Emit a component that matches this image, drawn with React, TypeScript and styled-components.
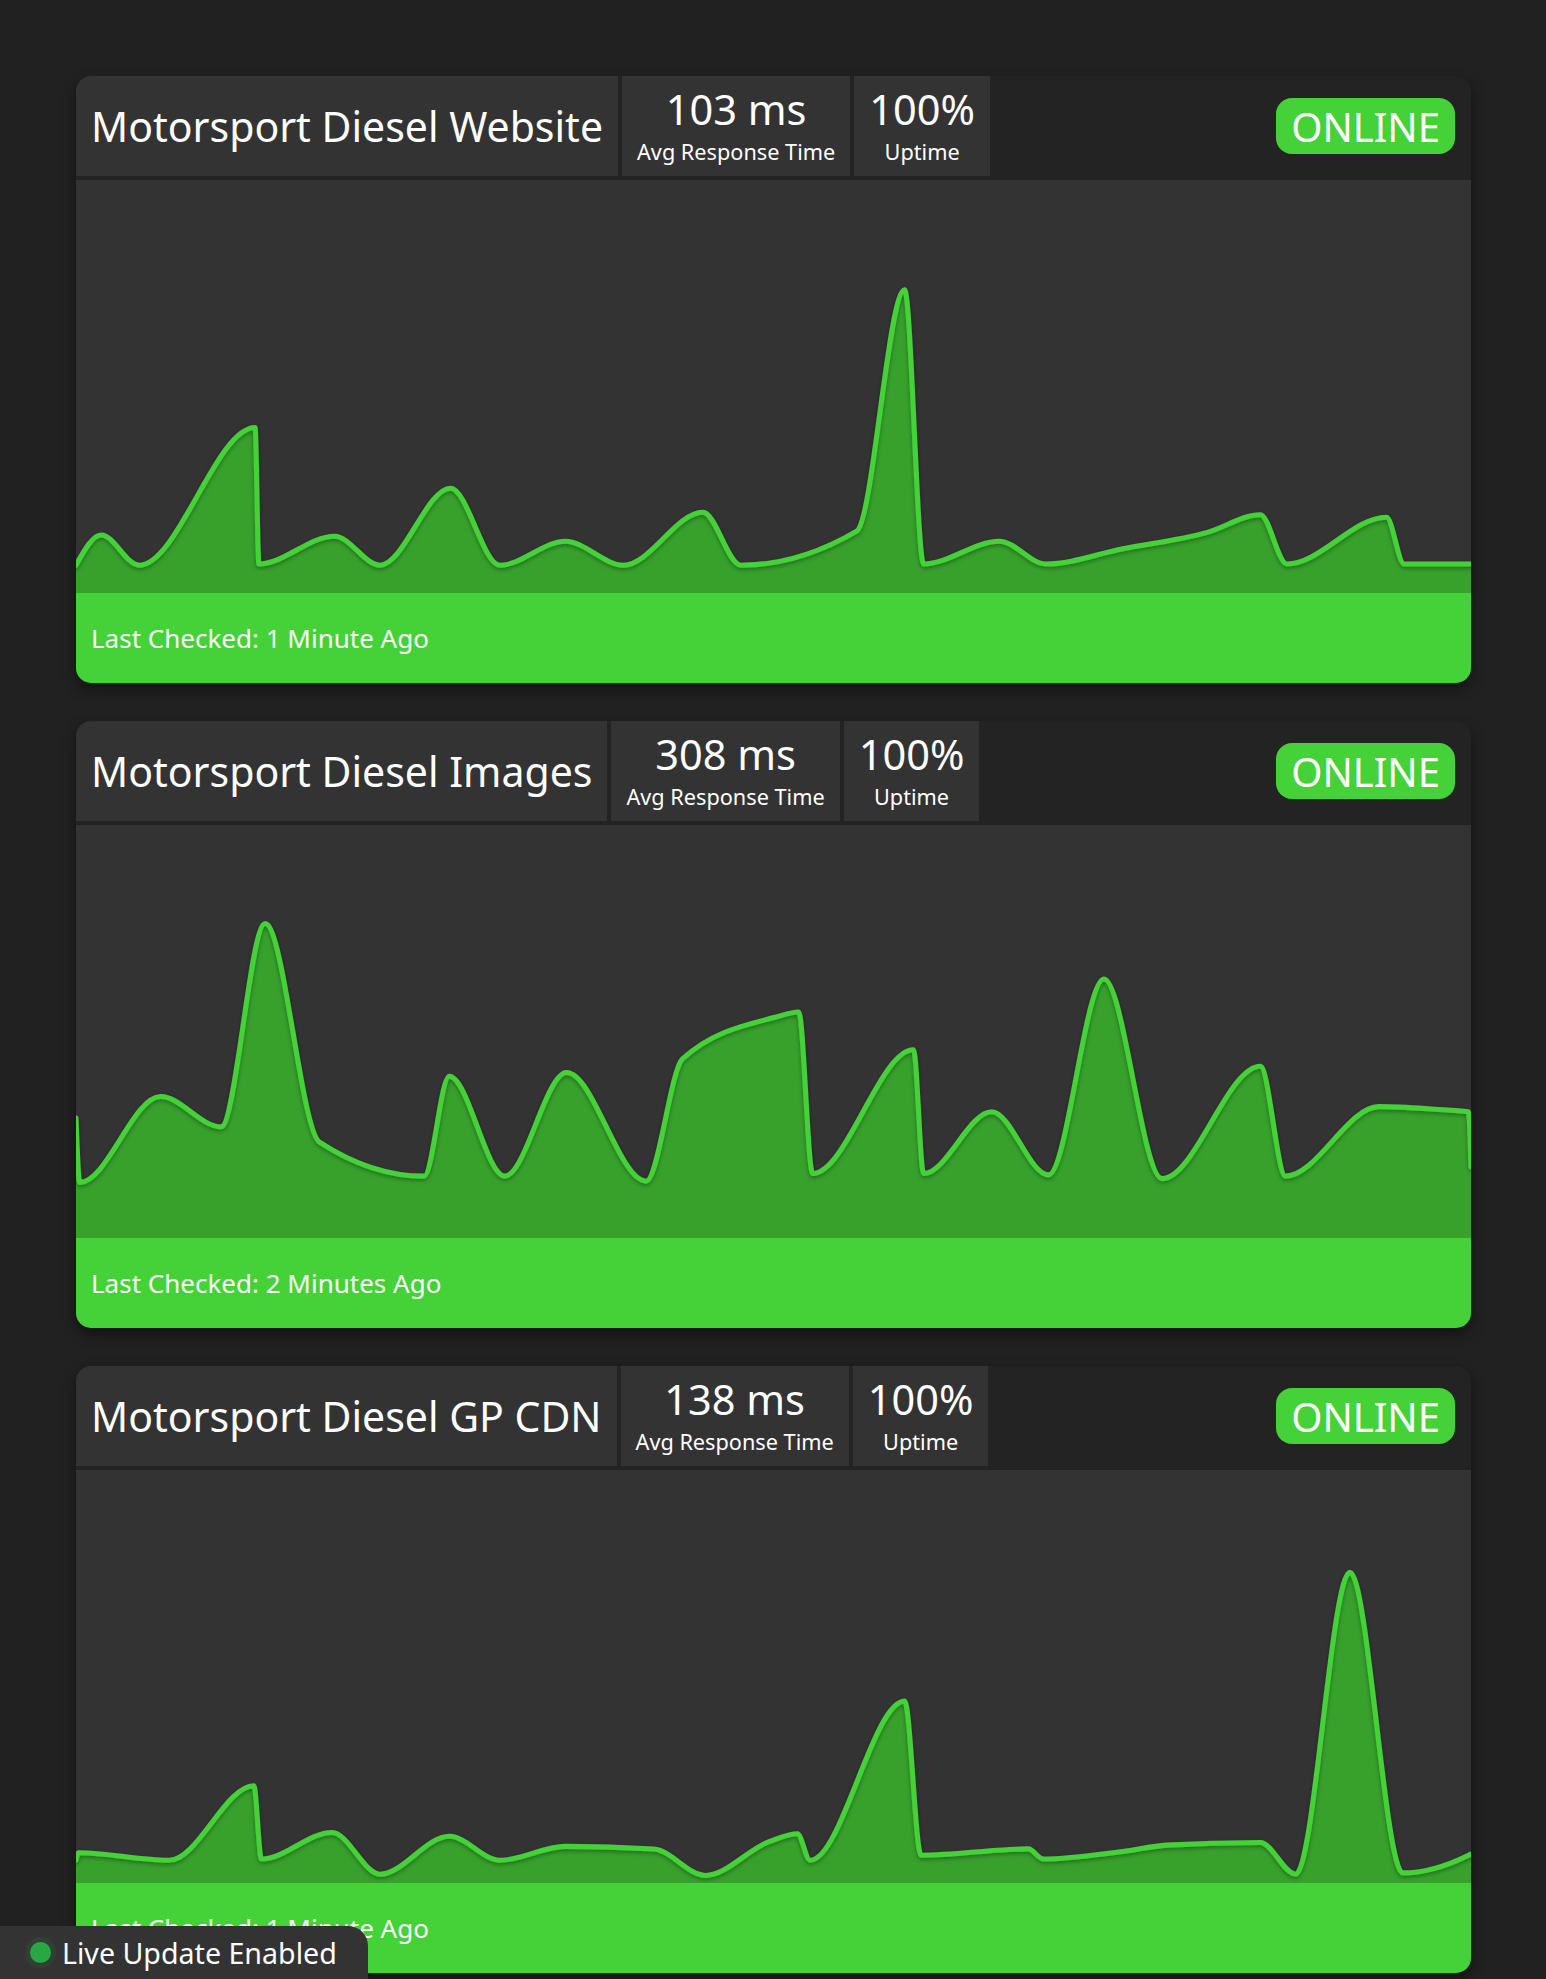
import React from "react";
import styled, { createGlobalStyle } from "styled-components";

type Pt = [number, number];

const GREEN = "#45d238";
const FILL = "#37a12c";
const CHART_W = 1106;
const CHART_H = 327;

const GlobalStyle = createGlobalStyle`
  body {
    margin: 0;
    background: #212121;
    font-family: "Noto Sans", "Open Sans", sans-serif;
    color: #fff;
  }
`;

const Page = styled.div`
  display: flex;
  flex-direction: column;
  gap: 38px;
  padding: 76px 75px 76px 76px;
`;

const Card = styled.div`
  background: #232323;
  border-radius: 15px;
  overflow: hidden;
  box-shadow: 0 6px 14px rgba(0, 0, 0, 0.45);
`;

const Header = styled.div`
  display: flex;
  align-items: stretch;
  gap: 4px;
  height: 100px;
  margin-bottom: 4px;
`;

const TitleBox = styled.div`
  display: flex;
  align-items: center;
  padding: 0 15px;
  background: #333;
  font-size: 41px;
  white-space: nowrap;
`;

const Stat = styled.div`
  display: flex;
  flex-direction: column;
  align-items: center;
  justify-content: center;
  padding: 0 15px;
  background: #333;
  white-space: nowrap;
`;

const StatValue = styled.div`
  font-size: 41.5px;
  line-height: 47px;
`;

const StatLabel = styled.div`
  margin-top: 5px;
  font-size: 21.7px;
  line-height: 28px;
`;

const StatusSlot = styled.div`
  margin-left: auto;
  align-self: center;
  padding-right: 16px;
`;

const StatusBadge = styled.div<{ $color: string }>`
  display: flex;
  align-items: center;
  height: 56px;
  padding: 0 15px;
  border-radius: 16px;
  background: ${(p) => p.$color};
  font-size: 40px;
`;

const ChartArea = styled.div`
  background: #333;
  height: 413px;

  svg {
    display: block;
    width: 100%;
    height: 100%;
  }
`;

const Footer = styled.div`
  display: flex;
  align-items: center;
  height: 90px;
  padding: 0 15px;
  background: ${GREEN};
  font-size: 26px;
`;

const LiveBadge = styled.div`
  position: fixed;
  left: 0;
  bottom: 0;
  display: flex;
  align-items: center;
  gap: 11px;
  height: 53px;
  padding: 0 31px 0 30px;
  background: #333;
  border-top-right-radius: 20px;
  font-size: 28.6px;
`;

const LiveDot = styled.span`
  width: 21px;
  height: 21px;
  border-radius: 50%;
  background: #28a745;
  box-shadow: 0 0 0 5px rgba(40, 167, 69, 0.12);
`;

// monotone cubic (same idea as d3 curveMonotoneX)
const sign = (v: number) => (v < 0 ? -1 : 1);

function monotonePath(pts: Pt[]): string {
  const n = pts.length;
  const t: number[] = new Array(n).fill(0);
  for (let i = 1; i < n - 1; i++) {
    const [x0, y0] = pts[i - 1];
    const [x1, y1] = pts[i];
    const [x2, y2] = pts[i + 1];
    const h0 = x1 - x0;
    const h1 = x2 - x1;
    const s0 = (y1 - y0) / h0;
    const s1 = (y2 - y1) / h1;
    const p = (s0 * h1 + s1 * h0) / (h0 + h1);
    t[i] = (sign(s0) + sign(s1)) * Math.min(Math.abs(s0), Math.abs(s1), 0.5 * Math.abs(p)) || 0;
  }
  if (n > 2) {
    t[0] = (3 * (pts[1][1] - pts[0][1]) / (pts[1][0] - pts[0][0]) - t[1]) / 2;
    t[n - 1] = (3 * (pts[n - 1][1] - pts[n - 2][1]) / (pts[n - 1][0] - pts[n - 2][0]) - t[n - 2]) / 2;
  }
  let d = `M${pts[0][0]},${pts[0][1]}`;
  for (let i = 1; i < n; i++) {
    const [x0, y0] = pts[i - 1];
    const [x1, y1] = pts[i];
    const dx = (x1 - x0) / 3;
    d += ` C${x0 + dx},${y0 + dx * t[i - 1]} ${x1 - dx},${y1 - dx * t[i]} ${x1},${y1}`;
  }
  return d;
}

function ResponseChart({ points }: { points: Pt[] }) {
  const line = monotonePath(points);
  const last = points[points.length - 1];
  const area = `${line} L${last[0]},${CHART_H} L${points[0][0]},${CHART_H} Z`;
  return (
    <svg viewBox={`0 0 ${CHART_W} ${CHART_H}`} preserveAspectRatio="none">
      <defs>
        <filter id="lineShadow" x="-5%" y="-5%" width="110%" height="120%">
          <feDropShadow dx="0" dy="1.5" stdDeviation="1.5" floodColor="#000" floodOpacity="0.35" />
        </filter>
      </defs>
      <path d={area} fill={FILL} />
      <path
        d={line}
        fill="none"
        stroke={GREEN}
        strokeWidth={4}
        strokeLinejoin="round"
        strokeLinecap="round"
        filter="url(#lineShadow)"
      />
    </svg>
  );
}

type Monitor = {
  name: string;
  avg: string;
  uptime: string;
  checked: string;
  points: Pt[];
};

const monitors: Monitor[] = [
  {
    name: "Motorsport Diesel Website",
    avg: "103 ms",
    uptime: "100%",
    checked: "1 Minute Ago",
    points: [
      [0, 305], [20, 281], [50, 305], [142, 196], [145, 304], [205, 282], [241, 305],
      [297, 244], [336, 305], [388, 286], [434, 305], [497, 263], [527, 305], [619, 278],
      [657, 87], [672, 304], [732, 286], [769, 304], [830, 292], [897, 279], [939, 265],
      [960, 304], [1039, 267], [1053, 304], [1106, 304],
    ],
  },
  {
    name: "Motorsport Diesel Images",
    avg: "308 ms",
    uptime: "100%",
    checked: "2 Minutes Ago",
    points: [
      [0, 232], [3, 283], [67, 215], [115, 239], [150, 78], [193, 251], [276, 278],
      [296, 199], [340, 278], [389, 196], [452, 282], [481, 185], [555, 152], [573, 148],
      [584, 276], [664, 178], [672, 276], [726, 227], [771, 277], [815, 122], [861, 280],
      [939, 191], [959, 278], [1033, 223], [1077, 225], [1104, 227], [1106, 271],
    ],
  },
  {
    name: "Motorsport Diesel GP CDN",
    avg: "138 ms",
    uptime: "100%",
    checked: "1 Minute Ago",
    points: [
      [0, 309], [2, 303], [74, 309], [141, 250], [147, 308], [203, 287], [241, 320],
      [296, 290], [336, 309], [388, 298], [458, 300], [499, 321], [550, 294], [572, 288],
      [582, 309], [657, 183], [670, 305], [755, 300], [767, 308], [830, 302], [865, 297],
      [939, 295], [967, 320], [1010, 81], [1052, 319], [1102, 306], [1106, 304],
    ],
  },
];

function MonitorCard({ m }: { m: Monitor }) {
  return (
    <Card>
      <Header>
        <TitleBox>{m.name}</TitleBox>
        <Stat>
          <StatValue>{m.avg}</StatValue>
          <StatLabel>Avg Response Time</StatLabel>
        </Stat>
        <Stat>
          <StatValue>{m.uptime}</StatValue>
          <StatLabel>Uptime</StatLabel>
        </Stat>
        <StatusSlot>
          <StatusBadge $color={GREEN}>ONLINE</StatusBadge>
        </StatusSlot>
      </Header>
      <ChartArea>
        <ResponseChart points={m.points} />
      </ChartArea>
      <Footer>Last Checked: {m.checked}</Footer>
    </Card>
  );
}

export default function App() {
  return (
    <>
      <GlobalStyle />
      <Page>
        {monitors.map((m) => (
          <MonitorCard key={m.name} m={m} />
        ))}
      </Page>
      <LiveBadge>
        <LiveDot />
        Live Update Enabled
      </LiveBadge>
    </>
  );
}
